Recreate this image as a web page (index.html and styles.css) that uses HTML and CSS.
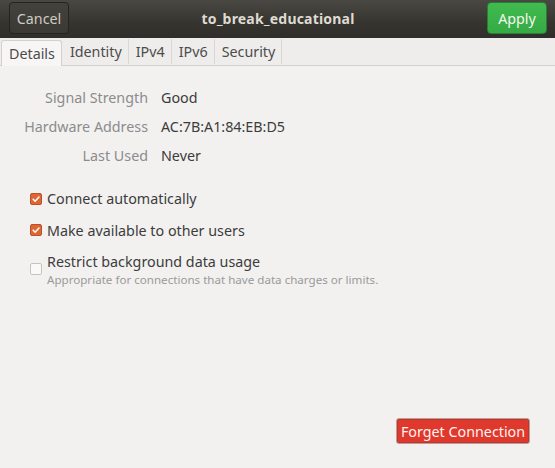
FILE: index.html
```html
<!DOCTYPE html>
<html>
<head>
<meta charset="utf-8">
<link rel="stylesheet" href="styles.css">
</head>
<body>
<div class="window">
  <header class="headerbar">
    <button class="hb-btn cancel">Cancel</button>
    <div class="title">to_break_educational</div>
    <button class="hb-btn apply">Apply</button>
  </header>
  <nav class="tabs">
    <div class="tab active">Details</div>
    <div class="tab">Identity</div>
    <div class="tab">IPv4</div>
    <div class="tab">IPv6</div>
    <div class="tab">Security</div>
  </nav>
  <main class="content">
    <div class="info">
      <div class="label">Signal Strength</div><div class="value">Good</div>
      <div class="label">Hardware Address</div><div class="value">AC:7B:A1:84:EB:D5</div>
      <div class="label">Last Used</div><div class="value">Never</div>
    </div>
    <div class="checks">
      <div class="check">
        <span class="box on"><svg viewBox="0 0 12 12" width="12" height="12"><path d="M2.6 6.2 L5 8.6 L9.6 3.6" fill="none" stroke="#fff" stroke-width="1.8" stroke-linecap="round" stroke-linejoin="round"/></svg></span>
        <span class="ctext">Connect automatically</span>
      </div>
      <div class="check">
        <span class="box on"><svg viewBox="0 0 12 12" width="12" height="12"><path d="M2.6 6.2 L5 8.6 L9.6 3.6" fill="none" stroke="#fff" stroke-width="1.8" stroke-linecap="round" stroke-linejoin="round"/></svg></span>
        <span class="ctext">Make available to other users</span>
      </div>
      <div class="check multi">
        <span class="box"></span>
        <span class="ctext"><span class="main">Restrict background data usage</span><span class="sub">Appropriate for connections that have data charges or limits.</span></span>
      </div>
    </div>
    <div class="footer">
      <button class="forget">Forget Connection</button>
    </div>
  </main>
</div>
</body>
</html>
```

FILE: styles.css
```css
html, body {
  margin: 0;
  padding: 0;
  width: 555px;
  height: 468px;
  overflow: hidden;
  background: #f2f1f0;
  font-family: "Noto Sans", "Open Sans", sans-serif;
  font-size: 14.3px;
  color: #3c3c3c;
}
.window {
  width: 555px;
  height: 468px;
  display: flex;
  flex-direction: column;
}
.headerbar {
  height: 38px;
  box-sizing: border-box;
  background: linear-gradient(#4a4843, #35342f 60%, #2f2e2a);
  display: flex;
  align-items: center;
  justify-content: space-between;
  padding: 0 8px 2px 9px;
  flex: none;
}
.title {
  color: #dfdbd2;
  font-weight: bold;
  font-size: 14px;
  letter-spacing: 0.2px;
}
.hb-btn {
  font-family: inherit;
  font-size: 14.3px;
  height: 32px;
  width: 60px;
  border-radius: 4px;
  padding: 0;
  margin: 0;
}
.cancel {
  background: linear-gradient(#43423d, #3a3934);
  border: 1px solid #252421;
  color: #cfcbc2;
}
.apply {
  background: linear-gradient(#41bb50, #34ab43);
  border: 1px solid #2a7d33;
  color: #f2f7ee;
}
.tabs {
  height: 28px;
  box-sizing: border-box;
  background: #efedeb;
  border-bottom: 1px solid #d4d1cc;
  display: flex;
  align-items: flex-end;
  padding-left: 1px;
  flex: none;
}
.tab {
  height: 25px;
  box-sizing: border-box;
  padding: 0 6px;
  display: flex;
  align-items: center;
  color: #4c4c4c;
  border-right: 1px solid #dcd9d4;
  margin-right: 1px;
  margin-bottom: 1px;
}
.tab.active {
  background: #f7f6f5;
  border: 1px solid #d4d1cc;
  border-bottom: none;
  border-radius: 3px 3px 0 0;
  height: 26px;
  margin-bottom: -1px;
  margin-right: 2px;
  padding: 0 6px 0 7px;
}
.content {
  flex: 1;
  display: flex;
  flex-direction: column;
  padding-top: 22px;
}
.info {
  display: grid;
  grid-template-columns: 148px auto;
  column-gap: 13px;
  row-gap: 10px;
  line-height: 19px;
}
.label {
  text-align: right;
  color: #8c8c8c;
}
.value {
  color: #3c3c3c;
}
.checks {
  margin-top: 24px;
  padding-left: 30px;
  display: flex;
  flex-direction: column;
  gap: 12.5px;
}
.check {
  display: flex;
  align-items: center;
  gap: 5px;
  line-height: 19px;
}
.check.multi {
  align-items: flex-start;
}
.check.multi .box {
  margin-top: 11px;
}
.box {
  width: 12px;
  height: 12px;
  box-sizing: border-box;
  border-radius: 2px;
  border: 1px solid #c7c4bf;
  background: #f9f9f8;
  display: flex;
  align-items: center;
  justify-content: center;
  flex: none;
}
.box.on {
  background: #e06530;
  border: 1px solid #b5532a;
}
.box svg {
  display: block;
}
.ctext {
  display: flex;
  flex-direction: column;
}
.main {
  line-height: 20px;
}
.sub {
  font-size: 11.6px;
  line-height: 16px;
  color: #9a9a9a;
}
.footer {
  margin-top: auto;
  display: flex;
  justify-content: flex-end;
  padding: 0 25px 24px 0;
}
.forget {
  font-family: inherit;
  font-size: 14.3px;
  background: #df382c;
  color: #fff3ef;
  border: 1px solid #a8a6a2;
  box-shadow: inset 0 0 0 1px #ce3023;
  border-radius: 3px;
  height: 26px;
  width: 134px;
  padding: 0;
}
```
